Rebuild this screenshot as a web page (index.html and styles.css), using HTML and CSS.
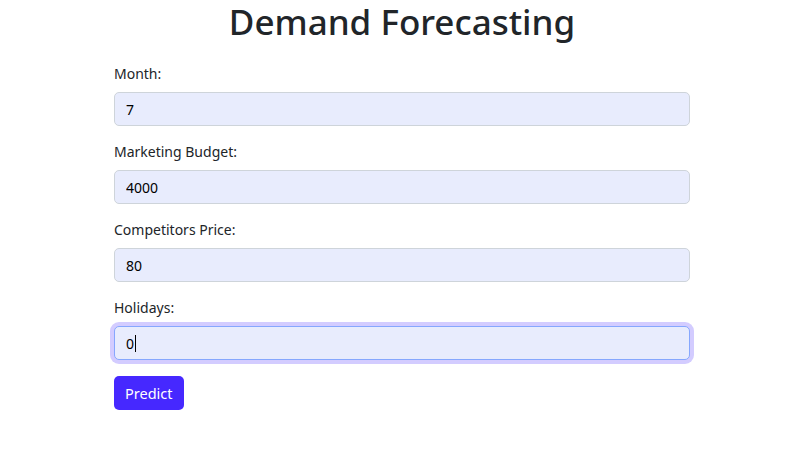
FILE: index.html
```html
<!DOCTYPE html>
<html lang="en">
<head>
<meta charset="utf-8">
<title>Demand Forecasting</title>
<link rel="stylesheet" href="styles.css">
</head>
<body>
<div class="container">
  <h1 class="title">Demand Forecasting</h1>
  <form class="form">
    <div class="group">
      <label class="label" for="month">Month:</label>
      <input class="input" id="month" type="text" value="7">
    </div>
    <div class="group">
      <label class="label" for="budget">Marketing Budget:</label>
      <input class="input" id="budget" type="text" value="4000">
    </div>
    <div class="group">
      <label class="label" for="price">Competitors Price:</label>
      <input class="input" id="price" type="text" value="80">
    </div>
    <div class="group">
      <label class="label" for="holidays">Holidays:</label>
      <div class="input input-focus"><span>0</span><span class="caret"></span></div>
    </div>
    <button class="btn" type="button">Predict</button>
  </form>
</div>
</body>
</html>
```
FILE: styles.css
```css
* { box-sizing: border-box; }
body {
  margin: 0;
  background: #fff;
  font-family: "Noto Sans", "DejaVu Sans", sans-serif;
  color: #212529;
}
.container {
  width: 576px;
  margin-left: 114px;
}
.title {
  margin: 0;
  padding-top: 1px;
  text-align: center;
  font-size: 35px;
  font-weight: 500;
  line-height: 42px;
  color: #212529;
}
.form {
  margin-top: 21px;
  display: flex;
  flex-direction: column;
}
.group {
  display: flex;
  flex-direction: column;
  margin-bottom: 16px;
}
.label {
  font-size: 14px;
  line-height: 20px;
  margin-bottom: 8px;
}
.input {
  width: 100%;
  height: 34px;
  padding: 0 11px;
  font-family: inherit;
  font-size: 14px;
  color: #000;
  background: #e8ecfd;
  border: 1px solid #ced4da;
  border-radius: 5px;
  outline: none;
}
.input-focus {
  display: flex;
  align-items: center;
  border-color: #86a7fe;
  box-shadow: 0 0 0 4px #d3ccff;
}
.caret {
  display: inline-block;
  width: 1px;
  height: 17px;
  background: #000;
  margin-left: 1px;
}
.btn {
  align-self: flex-start;
  height: 34px;
  padding: 0 11px;
  font-family: inherit;
  font-size: 14.5px;
  color: #fff;
  background: #4628ff;
  border: none;
  border-radius: 5px;
}
```
